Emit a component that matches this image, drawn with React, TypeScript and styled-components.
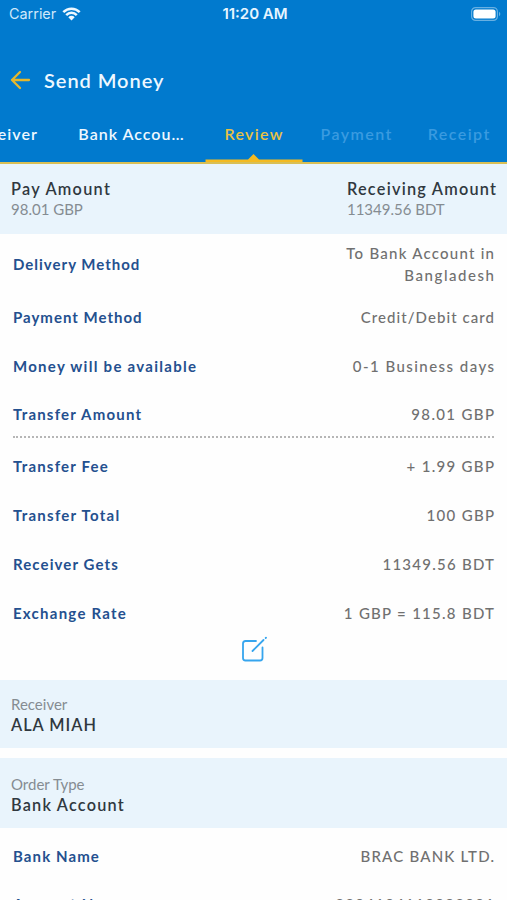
import React from "react";
import styled, { createGlobalStyle } from "styled-components";

const Global = createGlobalStyle`
  *{box-sizing:border-box}
  html,body{margin:0;height:900px;overflow:hidden;background:#fefefe}
  body{font-family:Lato,"Noto Sans",sans-serif;}
`;

const Screen = styled.main`width:507px;height:900px;overflow:hidden;background:#fefefe;`;
const Header = styled.header`height:164px;background:#017ace;border-bottom:2px solid #d9bf55;display:flex;flex-direction:column;overflow:hidden;`;
const StatusBar = styled.div`
  height:27px;padding:0 6px 0 9px;display:grid;grid-template-columns:1fr auto 1fr;align-items:center;
  color:#e6f5ff;font:400 14.4px/27px Inter,sans-serif;
`;
const Carrier = styled.div`display:flex;align-items:center;gap:6px;color:#cfe8fa;`;
const Clock = styled.div`font-weight:600;font-size:15px;`;
const Battery = styled.div`display:flex;justify-content:flex-end;`;
const TitleBar = styled.div`height:54px;margin-top:26px;padding-left:10px;display:flex;align-items:center;gap:13px;color:#eef8ff;`;
const Title = styled.h1`margin:0;font-size:20px;line-height:28px;font-weight:600;`;
const Tabs = styled.nav`flex:1;display:flex;align-items:flex-end;margin-left:-51px;`;
const Tab = styled.div<{ $w: number; $tone: string }>`
  flex:0 0 ${p => p.$w}px;height:55px;text-align:center;font-size:16px;line-height:53px;
  font-weight:600;color:${p => p.$tone};position:relative;white-space:nowrap;
`;
const Marker = styled.svg`position:absolute;left:0;bottom:0;display:block;`;
const T = styled.span<{ $ls?: number }>`letter-spacing:${p => p.$ls ?? 0}px;margin-right:${p => -(p.$ls ?? 0)}px;white-space:nowrap;`;
const Band = styled.section<{ $h: number; $top: number; $gap?: number }>`
  height:${p => p.$h}px;padding:${p => p.$top}px 11px 0;margin-top:${p => p.$gap ?? 0}px;
  background:#e9f4fc;display:flex;justify-content:space-between;
`;
const Block = styled.div`display:flex;flex-direction:column;align-items:flex-start;`;
const Strong = styled.div`font-size:16.3px;line-height:21px;font-weight:600;color:#30383f;`;
const Soft = styled.div`font-size:15px;line-height:20px;color:#858c92;`;
const List = styled.dl`margin:0;padding:0 13px;`;
const Row = styled.div<{ $h?: number; $rule?: boolean }>`
  height:${p => p.$h ?? 49}px;display:flex;justify-content:space-between;align-items:center;
  ${p => p.$rule ? "border-bottom:2px dotted #b6b6b6;margin-bottom:3px;" : ""}
`;
const Label = styled.dt`font-size:15px;line-height:22px;font-weight:700;color:#24508f;`;
const Value = styled.dd`margin:0;font-size:15px;line-height:22px;font-weight:500;color:#707070;text-align:right;display:flex;flex-direction:column;align-items:flex-end;`;
const Edit = styled.div`height:43px;display:flex;justify-content:center;padding-left:1px;`;
const EditIcon = styled.svg`margin-top:-1px;`;

const tabs = [
  { text: "Receiver", w: 108, ls: 1, tone: "#eef8ff" },
  { text: "Bank Accou…", w: 148, ls: 1, tone: "#eef8ff" },
  { text: "Review", w: 97, ls: 1.35, tone: "#e9c244", active: true },
  { text: "Payment", w: 108, ls: 1.45, tone: "#3a9be0" },
  { text: "Receipt", w: 97, ls: 1.45, tone: "#3a9be0" },
];
type Item = { label: string; l: number; value: [string, number][]; h?: number; rule?: boolean };
const items: Item[] = [
  { label: "Delivery Method", l: 1, value: [["To Bank Account in", 1.25], ["Bangladesh", 1.55]], h: 60 },
  { label: "Payment Method", l: 1, value: [["Credit/Debit card", 1.06]], h: 45 },
  { label: "Money will be available", l: 1.27, value: [["0-1 Business days", 1.45]], h: 53 },
  { label: "Transfer Amount", l: 1.2, value: [["98.01 GBP", 1.35]], h: 46, rule: true },
  { label: "Transfer Fee", l: 1.2, value: [["+ 1.99 GBP", 1.3]] },
  { label: "Transfer Total", l: 1.25, value: [["100 GBP", 1.3]] },
  { label: "Receiver Gets", l: 1.1, value: [["11349.56 BDT", 1.25]] },
  { label: "Exchange Rate", l: 1.25, value: [["1 GBP = 115.8 BDT", 1.27]] },
];
const account: Item[] = [
  { label: "Bank Name", l: 1.1, value: [["BRAC BANK LTD.", 1.2]], h: 55 },
  { label: "Account No.", l: 1.2, value: [["2204104110092001", 1.3]], h: 41 },
];
const Rows = ({ data }: { data: Item[] }) => (
  <List>
    {data.map(d => (
      <Row key={d.label} $h={d.h} $rule={d.rule}>
        <Label><T $ls={d.l}>{d.label}</T></Label>
        <Value>{d.value.map(([v, ls]) => <T key={v} $ls={ls}>{v}</T>)}</Value>
      </Row>
    ))}
  </List>
);

export default function App() {
  return (
    <Screen>
      <Global />
      <Header>
        <StatusBar>
          <Carrier>
            <T>Carrier</T>
            <svg width="19" height="14" viewBox="0 0 18 14" fill="none" stroke="#eef8ff" strokeWidth="2.5">
              <path d="M.8 5.1C5.4.5 12.6.5 17.2 5.1M3.7 8.1c3-3 7.6-3 10.6 0" />
              <path d="M5.800 10.300c1.900-1.900 4.500-1.900 6.400 0L9 13.600z" fill="#eef8ff" stroke="none" />
            </svg>
          </Carrier>
          <Clock><T>11:20 AM</T></Clock>
          <Battery>
            <svg width="30" height="14" viewBox="0 0 30 14" fill="none">
              <rect x=".6" y=".6" width="25.8" height="12.8" rx="4" stroke="#68b0e2" strokeWidth="1.2" />
              <rect x="2.4" y="2.4" width="22.2" height="9.2" rx="2.5" fill="#fff" />
              <path d="M28 4.8v4.4c1.8-.7 1.8-3.7 0-4.4z" fill="#68b0e2" />
            </svg>
          </Battery>
        </StatusBar>
        <TitleBar>
          <svg width="21" height="20" viewBox="0 0 21 20" fill="none" stroke="#e5b82d" strokeWidth="2.3" strokeLinecap="round" strokeLinejoin="round">
            <path d="M19 10H2M10 2 2 10l8 8" />
          </svg>
          <Title><T $ls={0.95}>Send Money</T></Title>
        </TitleBar>
        <Tabs>
          {tabs.map(t => (
            <Tab key={t.text} $w={t.w} $tone={t.tone}>
              <T $ls={t.ls}>{t.text}</T>
              {t.active && (
                <Marker width="98" height="8" viewBox="0 0 98 8"><path d="M.5 5.500H43L48.500 0 54 5.500h43.500V8H.5z" fill="#f3ba22" /></Marker>
              )}
            </Tab>
          ))}
        </Tabs>
      </Header>
      <Band $h={70} $top={14}>
        <Block><Strong><T $ls={1.28}>Pay Amount</T></Strong><Soft><T>98.01 GBP</T></Soft></Block>
        <Block><Strong><T $ls={1.23}>Receiving Amount</T></Strong><Soft><T>11349.56 BDT</T></Soft></Block>
      </Band>
      <Rows data={items} />
      <Edit>
        <EditIcon width="27" height="27" viewBox="0 0 27 27" fill="none" stroke="#36a5ee" strokeWidth="1.8" strokeLinecap="round">
          <path d="M15 5H4.500Q2 5 2 7.500V22q0 2.500 2.500 2.500H19q2.500 0 2.500-2.500V11.500M11.500 15 22.500 4M24.700 2l.3-.3" />
        </EditIcon>
      </Edit>
      <Band $h={68} $top={14}>
        <Block><Soft><T>Receiver</T></Soft><Strong><T $ls={1}>ALA MIAH</T></Strong></Block>
      </Band>
      <Band $h={70} $top={16} $gap={10}>
        <Block><Soft><T>Order Type</T></Soft><Strong><T $ls={1.2}>Bank Account</T></Strong></Block>
      </Band>
      <Rows data={account} />
    </Screen>
  );
}
